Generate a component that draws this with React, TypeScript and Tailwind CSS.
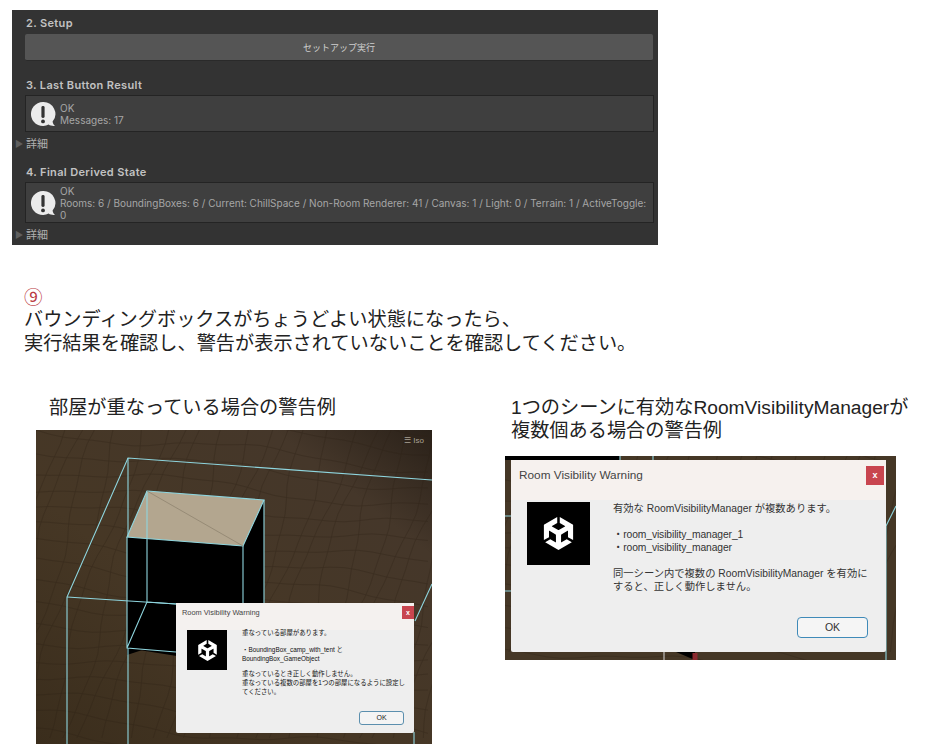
import React from "react";
import { SiUnity } from "react-icons/si";

const jpFont = "font-['Liberation_Sans','Noto_Sans_CJK_JP',sans-serif]";
const uiFont = "font-['Inter','Noto_Sans_CJK_JP',sans-serif]";

// Speech bubble with an exclamation mark, as in Unity's HelpBox
const InfoBubble = () => (
  <svg width="26" height="26" viewBox="0 0 26 26" className="shrink-0">
    <path
      d="M13 1a12 12 0 1 0 5.6 22.6c1.6 1.2 3.8 1.6 6.4 1.4-1.4-1.2-2.2-2.6-2.4-4.4A12 12 0 0 0 13 1z"
      fill="#ececec"
    />
    <rect x="11.4" y="5" width="3.2" height="12" rx="1.4" fill="#333" />
    <circle cx="13" cy="20.4" r="1.9" fill="#333" />
  </svg>
);

const SectionLabel = ({ children }: { children: React.ReactNode }) => (
  <div className="text-[11px] leading-[14px] font-semibold text-[#c2c2c2] tracking-[0.35px]">
    {children}
  </div>
);

const Details = () => (
  <div className="flex items-center text-[11px] leading-[14px] text-[#b0b0b0]">
    <span className="ml-[3px] w-[11px] text-[9px] text-[#5f5f5f]">▶</span>
    <span>詳細</span>
  </div>
);

const HelpBox = ({ lines, height }: { lines: string[]; height: string }) => (
  <div
    className={`mt-[3px] ml-[13px] mr-[4px] flex items-center gap-[4px] pl-[4px] bg-[#3f3f3f] border border-[#242424] ${height}`}
  >
    <InfoBubble />
    <div className="text-[10px] leading-[12px] text-[#a6a6a6] whitespace-nowrap">
      {lines.map((line) => (
        <div key={line}>{line}</div>
      ))}
    </div>
  </div>
);

const InspectorPanel = () => (
  <div className={`ml-[12px] mt-[10px] w-[646px] h-[235px] bg-[#333333] pt-[6px] overflow-hidden ${uiFont}`}>
    <div className="ml-[14px]">
      <SectionLabel>2. Setup</SectionLabel>
    </div>
    <button className="block mt-[4px] ml-[13px] w-[628px] h-[27px] pt-[2px] bg-[#555555] border-b border-[#2a2a2a] rounded-[2px] text-[9px] text-[#d0d0d0]">
      セットアップ実行
    </button>
    <div className="ml-[14px] mt-[17px]">
      <SectionLabel>3. Last Button Result</SectionLabel>
    </div>
    <HelpBox lines={["OK", "Messages: 17"]} height="h-[37px]" />
    <div className="mt-[5px]">
      <Details />
    </div>
    <div className="ml-[14px] mt-[14px]">
      <SectionLabel>4. Final Derived State</SectionLabel>
    </div>
    <HelpBox
      lines={[
        "OK",
        "Rooms: 6 / BoundingBoxes: 6 / Current: ChillSpace / Non-Room Renderer: 41 / Canvas: 1 / Light: 0 / Terrain: 1 / ActiveToggle:",
        "0",
      ]}
      height="h-[41px]"
    />
    <div className="mt-[5px]">
      <Details />
    </div>
  </div>
);

// Wobbly wireframe over the brown ground
const Terrain = ({ w, h }: { w: number; h: number }) => {
  const across: string[] = [];
  const down: string[] = [];
  for (let i = -4; i < 26; i++) {
    let d = "";
    for (let x = 0; x <= w; x += 14) {
      const y = i * 19 + x * 0.1 + Math.sin(x / 45 + i * 0.7) * 6 + Math.sin(x / 13 + i) * 1.2;
      d += `${x === 0 ? "M" : "L"}${x} ${y.toFixed(1)}`;
    }
    across.push(d);
  }
  for (let i = -6; i < 34; i++) {
    let d = "";
    for (let y = 0; y <= h; y += 14) {
      const x = i * 21 - y * 0.32 + Math.sin(y / 38 + i * 1.3) * 7 + Math.sin(y / 11 + i) * 1.2;
      d += `${y === 0 ? "M" : "L"}${x.toFixed(1)} ${y}`;
    }
    down.push(d);
  }
  return (
    <g fill="none" stroke="#2d2215" strokeWidth="0.6" opacity="0.5">
      {across.map((d, i) => (
        <path key={`a${i}`} d={d} />
      ))}
      {down.map((d, i) => (
        <path key={`d${i}`} d={d} />
      ))}
    </g>
  );
};

const WarningDialog = ({
  small,
  className,
  children,
}: {
  small: boolean;
  className: string;
  children: React.ReactNode;
}) => (
  <div className={`absolute flex flex-col bg-[#eeeeee] rounded-[2px] text-[#222] ${jpFont} ${className}`}>
    <div
      className={
        small
          ? "flex justify-between items-start pl-[6px] pt-[3px] h-[27px] bg-[#f4f1ef] text-[7.4px] leading-[14px]"
          : "flex justify-between items-start pl-[8px] pr-[2px] pt-[7px] h-[40px] bg-[#f6f1ee] text-[11.8px] leading-[16px]"
      }
    >
      <span className="text-[#444]">Room Visibility Warning</span>
      <span
        className={
          small
            ? "w-[12px] h-[13px] bg-[#c8454f] text-white text-[7px] leading-[13px] text-center font-bold"
            : "w-[18px] h-[19px] mt-[-1px] bg-[#c8454f] text-white text-[9px] leading-[19px] text-center font-bold"
        }
      >
        x
      </span>
    </div>
    {children}
  </div>
);

const SmallDialog = () => (
  <WarningDialog small className="left-[140px] top-[173px] w-[238px] h-[130px]">
    <div className="flex ml-[11px]">
      <div className="w-[40px] h-[40px] bg-black flex items-center justify-center text-white">
        <SiUnity size={21} />
      </div>
      <div className="ml-[15px] text-[6.4px] leading-[9px] text-[#111] whitespace-nowrap">
        <div className="mt-[-2px]">重なっている部屋があります。</div>
        <div className="mt-[7.5px]">・BoundingBox_camp_with_tent と</div>
        <div>BoundingBox_GameObject</div>
        <div className="mt-[6px]">重なっているとき正しく動作しません。</div>
        <div>重なっている複数の部屋を1つの部屋になるように設定し</div>
        <div>てください。</div>
      </div>
    </div>
    <div className="mt-auto mb-[8px] mr-[10px] self-end w-[45px] h-[14px] border border-[#5b8fae] rounded-[3px] bg-[#f4f4f4] text-[7px] leading-[12px] text-center">
      OK
    </div>
  </WarningDialog>
);

const LargeDialog = () => (
  <WarningDialog small={false} className="left-[6px] top-[4px] w-[375px] h-[192px]">
    <div className="flex ml-[16px] mt-[2px]">
      <div className="w-[63px] h-[63px] bg-black flex items-center justify-center text-white">
        <SiUnity size={33} />
      </div>
      <div className="ml-[23px] text-[10.3px] leading-[13px] text-[#333] whitespace-nowrap">
        <div>有効な RoomVisibilityManager が複数あります。</div>
        <div className="mt-[13px] tracking-[-0.1px]">・room_visibility_manager_1</div>
        <div className="tracking-[-0.1px]">・room_visibility_manager</div>
        <div className="mt-[13px]">同一シーン内で複数の RoomVisibilityManager を有効に</div>
        <div>すると、正しく動作しません。</div>
      </div>
    </div>
    <div className="mt-auto mb-[14px] mr-[18px] self-end w-[71px] h-[21px] border border-[#3f8ab8] rounded-[4px] bg-[#f5f5f5] text-[10.5px] leading-[19px] text-center text-[#333]">
      OK
    </div>
  </WarningDialog>
);

const OverlapScene = () => (
  <div className="relative w-[396px] h-[314px] bg-[#43352a] overflow-hidden">
    <svg width="396" height="314" viewBox="0 0 396 314" className="block">
      <defs>
        <linearGradient id="shade" x1="0" y1="1" x2="1" y2="0">
          <stop offset="0" stopColor="#3a2d1c" />
          <stop offset="0.4" stopColor="#463725" />
          <stop offset="0.8" stopColor="#45372a" />
          <stop offset="1" stopColor="#2a2119" />
        </linearGradient>
      </defs>
      <rect width="396" height="314" fill="url(#shade)" />
      <Terrain w={396} h={314} />
      <polygon points="91,107 207,116 228,70 228,180 91,225" fill="#000" />
      <polygon points="91,225 111,172 228,180 228,240 91,218" fill="#000" />
      <polygon points="111,61 228,70 207,116 91,107" fill="#b3a68f" />
      <g fill="none" stroke="#8fd6df" strokeWidth="1.1">
        <path d="M31 314V167L92 28 396 50" />
        <path d="M92 28V107M92 218V314" />
        <path d="M31 167 140 174" />
        <path d="M379 191 396 154M378 302V314" />
        <path d="M111 61 228 70 207 116 91 107Z" />
        <path d="M91 107V218L140 222M111 61V172L91 218M111 172 140 174M207 116V174M228 70V174" />
      </g>
      <path d="M111 61 207 116" stroke="#8f8470" strokeWidth="0.8" />
    </svg>
    <span className={`absolute right-[8px] top-[5px] text-[8px] text-[#a9a294] ${jpFont}`}>☰ Iso</span>
    <SmallDialog />
  </div>
);

const ManagerScene = () => (
  <div className="relative w-[391px] h-[204px] bg-[#43352a] overflow-hidden">
    <svg width="391" height="204" viewBox="0 0 391 204" className="block">
      <rect width="391" height="204" fill="#453726" />
      <Terrain w={391} h={204} />
      <path d="M0 0H115V4H0Z" fill="#000" />
      <polygon points="171,196 190,196 190,204" fill="#000" />
      <path d="M190 197V204" stroke="#8c2a30" strokeWidth="5" />
      <g fill="none" stroke="#8fd6df" strokeWidth="1.1">
        <path d="M115 0V4M148 0V4M0 60H6M0 135H6M381 70 391 50M381 70V204" />
      </g>
      <path d="M159 196V204" stroke="#d8d8d8" strokeWidth="1" />
    </svg>
    <LargeDialog />
  </div>
);

export default function App() {
  return (
    <div className={`w-[928px] h-[752px] bg-white overflow-hidden text-[#222] ${jpFont}`}>
      <InspectorPanel />

      <div className="ml-[24px] mt-[43px] text-[19.2px] leading-[24px]">
        <div className="text-[#b93a42] text-[18.5px] leading-[20px]">⑨</div>
        <div>バウンディングボックスがちょうどよい状態になったら、</div>
        <div>実行結果を確認し、警告が表示されていないことを確認してください。</div>
      </div>

      <div className="flex mt-[40px]">
        <div className="ml-[36px] w-[396px]">
          <div className="ml-[13px] text-[19.2px] leading-[24px] h-[34px]">部屋が重なっている場合の警告例</div>
          <OverlapScene />
        </div>
        <div className="ml-[73px] w-[400px]">
          <div className="ml-[6px] text-[19.2px] leading-[23px] h-[60px] whitespace-nowrap">
            <div>1つのシーンに有効なRoomVisibilityManagerが</div>
            <div>複数個ある場合の警告例</div>
          </div>
          <ManagerScene />
        </div>
      </div>
    </div>
  );
}
